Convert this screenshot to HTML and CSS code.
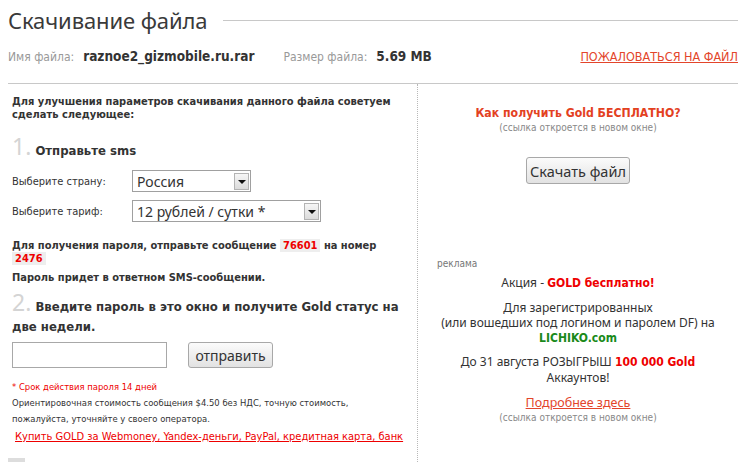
FILE: index.html
```html
<!DOCTYPE html>
<html lang="ru">
<head>
<meta charset="utf-8">
<title>Скачивание файла</title>
<link rel="stylesheet" href="styles.css">
</head>
<body>
<div class="page">
  <div class="head">
    <h1>Скачивание файла</h1>
    <div class="rule"></div>
  </div>
  <div class="info">
    <span class="lbl">Имя файла:</span>
    <span class="val name">raznoe2_gizmobile.ru.rar</span>
    <span class="lbl">Размер файла:</span>
    <span class="val">5.69 MB</span>
    <a class="complain" href="#">ПОЖАЛОВАТЬСЯ НА ФАЙЛ</a>
  </div>
  <div class="cols">
    <div class="left">
      <p class="intro">Для улучшения параметров скачивания данного файла советуем сделать следующее:</p>
      <div class="step step1"><span class="num">1.</span> Отправьте sms</div>
      <div class="field">
        <span class="flabel">Выберите страну:</span>
        <div class="select s-country"><span class="stext">Россия</span><span class="arrow"></span></div>
      </div>
      <div class="field">
        <span class="flabel">Выберите тариф:</span>
        <div class="select s-tariff"><span class="stext">12 рублей / сутки *</span><span class="arrow"></span></div>
      </div>
      <p class="sms">Для получения пароля, отправьте сообщение <span class="code">76601</span> на номер <span class="code">2476</span></p>
      <p class="sms reply">Пароль придет в ответном SMS-сообщении.</p>
      <div class="step step2"><span class="num">2.</span> Введите пароль в это окно и получите Gold статус на две недели.</div>
      <div class="pwrow">
        <input class="pw" type="text">
        <button class="btn send" type="button">отправить</button>
      </div>
      <p class="note red">* Срок действия пароля 14 дней</p>
      <p class="note">Ориентировочная стоимость сообщения $4.50 без НДС, точную стоимость, пожалуйста, уточняйте у своего оператора.</p>
      <a class="buy" href="#">Купить GOLD за Webmoney, Yandex-деньги, PayPal, кредитная карта, банк</a>
      <div class="stub"></div>
    </div>
    <div class="right">
      <a class="free" href="#">Как получить Gold БЕСПЛАТНО?</a>
      <div class="hint">(ссылка откроется в новом окне)</div>
      <button class="btn dl" type="button">Скачать файл</button>
      <div class="ad">
        <div class="adlabel">реклама</div>
        <p class="adtitle">Акция - <b class="redb">GOLD бесплатно!</b></p>
        <p class="adtext">Для зарегистрированных<br>(или вошедших под логином и паролем DF) на<br><b class="green">LICHIKO.com</b></p>
        <p class="adtext">До 31 августа РОЗЫГРЫШ <b class="redb">100 000 Gold</b><br>Аккаунтов!</p>
        <a class="more" href="#">Подробнее здесь</a>
        <div class="hint">(ссылка откроется в новом окне)</div>
      </div>
    </div>
  </div>
</div>
</body>
</html>
```

FILE: styles.css
```css
* { box-sizing: border-box; }
html, body { margin: 0; padding: 0; background: #fff; }
body { font-family: "DejaVu Sans Condensed", "DejaVu Sans", sans-serif; color: #333; }
.page { padding: 4px 8px 0 8px; width: 746px; }
p { margin: 0; }

.head { display: flex; align-items: center; height: 32px; }
.head h1 { margin: 0; font-family: "Noto Sans", "Open Sans", sans-serif; font-weight: 400; font-size: 22px; color: #3a3a3a; line-height: 32px; letter-spacing: -0.1px; }
.rule { flex: 1; border-top: 1px solid #c8c8c8; margin-left: 16px; }

.info { display: flex; align-items: baseline; height: 48px; padding-top: 12px; border-bottom: 1px solid #c8c8c8; }
.lbl { font-size: 12px; color: #999; margin-right: 9px; }
.val { font-weight: bold; font-size: 13.5px; color: #333; }
.val.name { margin-right: 29px; }
.complain { margin-left: auto; font-size: 12.5px; color: #e3452b; text-decoration: underline; }

.cols { display: grid; grid-template-columns: 410px 1fr; }
.left { padding: 11px 0 0 4px; border-right: 1px dotted #b8b8b8; min-height: 380px; }
.intro { font-weight: bold; font-size: 11px; line-height: 13px; color: #333; width: 396px; }

.step { font-weight: bold; color: #333; }
.num { font-family: "Noto Sans", sans-serif; font-weight: 400; font-size: 23px; line-height: 1; color: #d4d4d4; }
.step1 { font-size: 13px; margin-top: 14px; line-height: 26px; }
.step2 { font-size: 13px; margin-top: 7px; line-height: 20px; width: 400px; }

.field { display: flex; align-items: center; margin-top: 4px; height: 26px; }
.field + .field { margin-top: 4px; }
.flabel { font-size: 11px; width: 120px; color: #333; }
.select { display: flex; align-items: center; height: 22px; border: 1px solid #a0a0a0; background: #fff; padding: 1px 1px 1px 4px; font-family: "Noto Sans", sans-serif; font-size: 14px; color: #333; }
.s-country { width: 119px; }
.s-tariff { width: 189px; }
.stext { flex: 1; }
.arrow { width: 15px; height: 17px; border: 1px solid #b4b4b4; background: linear-gradient(#f6f6f6, #dcdcdc); position: relative; }
.arrow::after { content: ""; position: absolute; left: 3px; top: 6px; border-left: 4px solid transparent; border-right: 4px solid transparent; border-top: 4px solid #111; }

.sms { font-weight: bold; font-size: 11px; line-height: 13px; margin-top: 15px; width: 396px; }
.sms.reply { margin-top: 6px; }
.code { color: #e00; background: #eee; padding: 0 3px; }

.pwrow { display: flex; align-items: center; margin-top: 5px; gap: 21px; }
.pw { width: 155px; height: 26px; border: 1px solid #a8a8a8; margin: 0; }
.btn { font-family: "Noto Sans", sans-serif; font-size: 14px; color: #333; border: 1px solid #a8a8a8; border-radius: 3px; background: linear-gradient(#fbfbfb, #e2e2e2); padding: 0; height: 26px; }
.send { width: 85px; }

.note { font-size: 9.4px; line-height: 16px; color: #333; width: 380px; }
.note.red { color: #e00; margin-top: 11px; }
.buy { display: block; margin-top: 2px; margin-left: 3px; font-size: 11px; line-height: 16px; color: #e00; text-decoration: underline; white-space: nowrap; }
.stub { width: 17px; height: 4px; background: #ddd; margin-top: 13px; margin-left: -4px; }

.right { display: flex; flex-direction: column; align-items: center; padding-top: 21px; text-align: center; }
.free { font-weight: bold; font-size: 12.2px; color: #e3411f; text-decoration: none; line-height: 16px; }
.hint { font-size: 10px; color: #888; line-height: 14px; }
.dl { margin-top: 22px; width: 104px; height: 27px; font-size: 14.5px; }

.ad { align-self: stretch; margin-top: 74px; }
.adlabel { text-align: left; padding-left: 19px; font-size: 10px; color: #777; line-height: 12px; }
.adtitle, .adtext { font-family: "Noto Sans", sans-serif; font-size: 12px; color: #333; line-height: 15px; }
.adtitle { margin-top: 5px; }
.adtext { margin-top: 9px; }
.adtext + .adtext { margin-top: 8px; }
.redb { color: #e00; font-weight: bold; font-family: "DejaVu Sans Condensed", sans-serif; }
.green { color: #1a8a1a; font-weight: bold; font-family: "DejaVu Sans Condensed", sans-serif; }
.more { display: inline-block; margin-top: 10px; font-family: "Noto Sans", sans-serif; font-size: 12.5px; color: #e3452b; text-decoration: underline; line-height: 15px; }
```
